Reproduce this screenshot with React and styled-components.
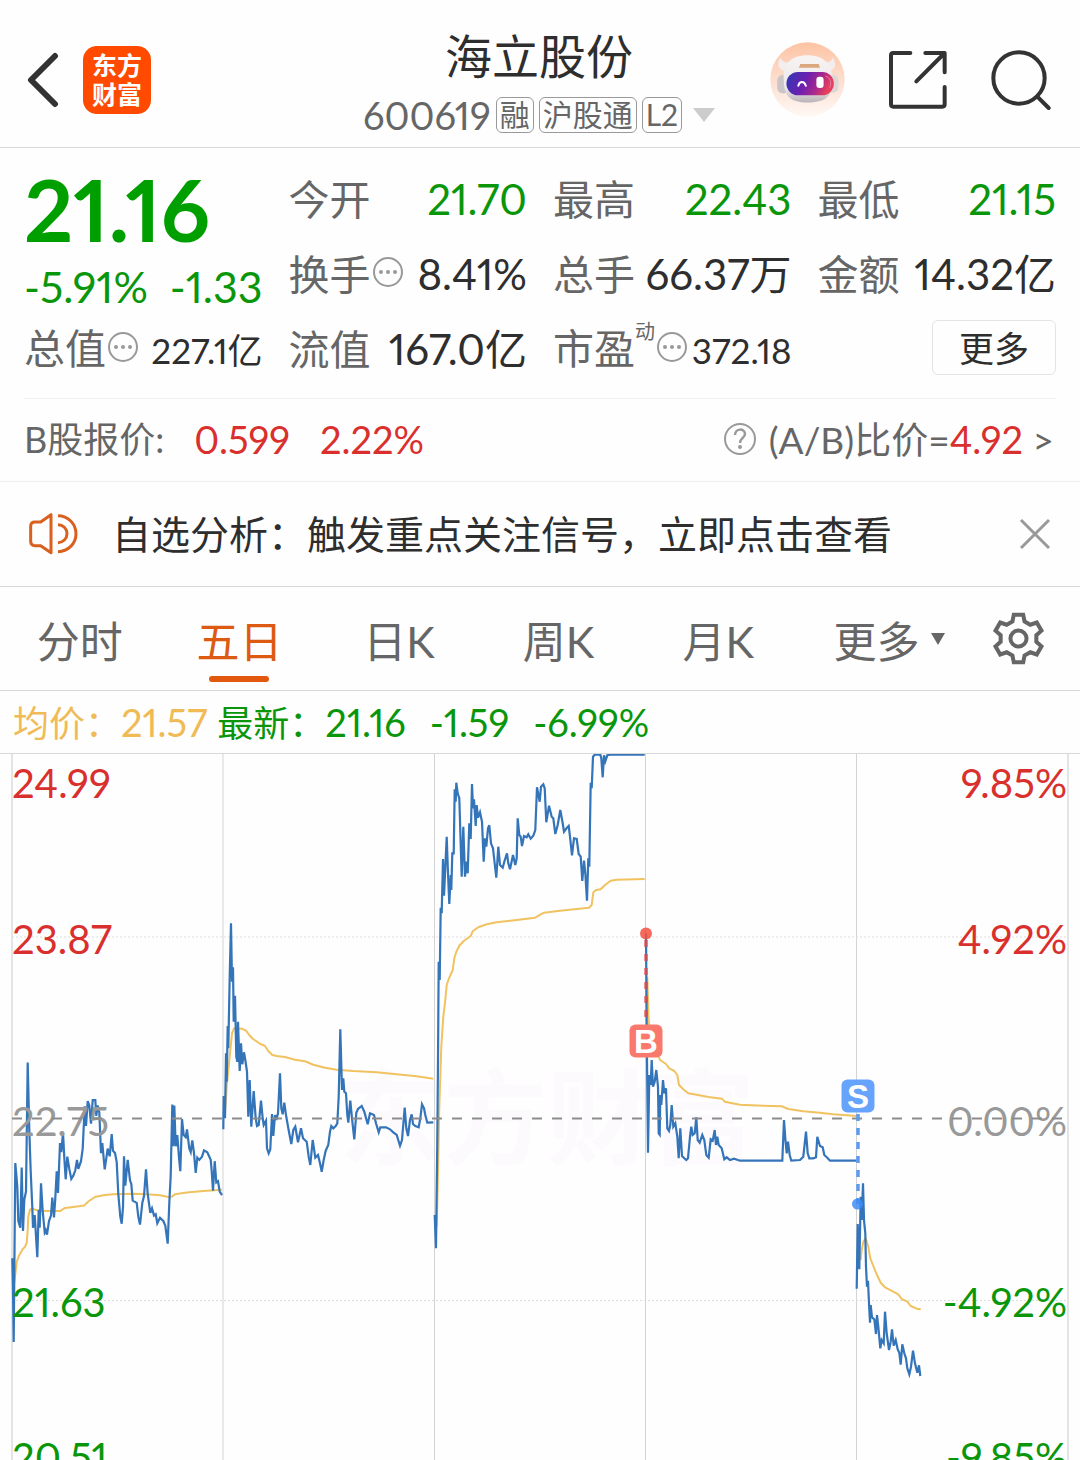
import React, { Fragment, useState } from 'react';
import styled, { createGlobalStyle } from 'styled-components';

const GREEN = '#0a960a';
const RED = '#d9302e';
const GRAY = '#666666';
const DARK = '#2e2e2e';

const GlobalStyle = createGlobalStyle`
    * {
        box-sizing: border-box;
    }
    body {
        margin: 0;
        background-color: #fefefe;
        font-family: Lato, "Noto Sans CJK SC", sans-serif;
        font-variant-numeric: proportional-nums;
        color: ${DARK};
    }
    button {
        margin: 0;
        padding: 0;
        border: 0;
        background: none;
        font: inherit;
        font-variant-numeric: inherit;
        color: inherit;
        cursor: pointer;
    }
    svg {
        display: block;
        flex: none;
    }
`;

const Page = styled.div`
    display: flex;
    flex-direction: column;
    height: 100vh;
    overflow: hidden;
`;

/* ---------- header ---------- */
const TopBar = styled.header`
    display: grid;
    grid-template-columns: 1fr auto 1fr;
    align-items: center;
    min-height: 148px;
    padding: 12px 29px 0 27px;
    border-bottom: 1px solid #d8d8d8;
`;

const TopSide = styled.div`
    display: flex;
    align-items: center;
    justify-content: ${props => (props.$end ? 'flex-end' : 'flex-start')};
    gap: ${props => (props.$end ? '44px' : '24px')};
`;

const Logo = styled.div`
    width: 68px;
    height: 68px;
    padding: 5px 0;
    border-radius: 14px;
    background-color: #ff4a00;
    color: #ffffff;
    font-size: 25px;
    font-weight: bold;
    line-height: 29px;
    text-align: center;
`;

const TitleBox = styled.div`
    display: flex;
    flex-direction: column;
    align-items: center;
`;

const StockName = styled.h1`
    margin: 0;
    font-size: 47px;
    font-weight: normal;
    line-height: 70px;
`;

const StockCode = styled.button`
    display: flex;
    align-items: center;
    gap: 5px;
    color: ${GRAY};
    font-size: 38px;
    line-height: 48px;
`;

const Badge = styled.span`
    height: 36px;
    padding: 0 3px;
    border: 1px solid #999999;
    border-radius: 6px;
    font-size: 30px;
    line-height: 33px;
`;

const Caret = styled.span`
    width: 0;
    height: 0;
    margin-left: ${props => props.$gap}px;
    border: ${props => props.$size}px solid transparent;
    border-top: ${props => props.$drop}px solid ${props => props.$color};
    border-bottom: 0;
`;

/* ---------- quote ---------- */
const Quote = styled.section`
    display: grid;
    grid-template-columns: repeat(4, 1fr);
    grid-auto-rows: 75px;
    column-gap: 26px;
    margin: 0 24px;
    padding: 15px 0 10px;
    border-bottom: 1px solid #f0f0f0;
`;

const PriceBox = styled.div`
    grid-row: span 2;
    color: ${GREEN};
`;

const Price = styled.div`
    color: #009f00;
    font-size: 86px;
    font-weight: bold;
    line-height: 92px;
`;

const Change = styled.div`
    display: flex;
    justify-content: space-between;
    font-size: 43px;
    line-height: 64px;
`;

const Stat = styled.div`
    display: flex;
    align-items: baseline;
    line-height: 72px;
`;

const StatLabel = styled.span`
    color: ${GRAY};
    font-size: 41px;
    white-space: nowrap;
`;

const StatSup = styled.span`
    align-self: flex-start;
    color: ${GRAY};
    font-size: 20px;
    line-height: 36px;
`;

const StatValue = styled.span`
    margin-left: auto;
    color: ${props => props.$color || DARK};
    font-size: ${props => (props.$small ? 35 : 42)}px;
    white-space: nowrap;
`;

const TipButton = styled.button`
    align-self: center;
    margin: 0 0 8px 2px;
`;

const MoreButton = styled.button`
    place-self: start end;
    width: 124px;
    height: 55px;
    margin-top: 7px;
    border: 1px solid #e4e4e4;
    border-radius: 6px;
    font-size: 35px;
    line-height: 50px;
`;

/* ---------- B share ---------- */
const BShare = styled.section`
    display: flex;
    align-items: center;
    justify-content: space-between;
    min-height: 83px;
    padding: 0 26px 2px 24px;
    border-bottom: 1px solid #eeeeee;
    color: ${GRAY};
    font-size: 36px;
    line-height: 50px;
`;

const BPart = styled.div`
    display: flex;
    align-items: center;
    gap: ${props => props.$gap}px;
`;

const Up = styled.span`
    color: ${RED};
    font-size: 38px;
`;

const RatioLink = styled.a`
    color: inherit;
    font-size: 37px;
    text-decoration: none;
`;

/* ---------- notice ---------- */
const Notice = styled.section`
    display: flex;
    align-items: center;
    min-height: 105px;
    padding: 0 29px 0 28px;
    border-bottom: 1px solid #d8d8d8;
`;

const NoticeText = styled.p`
    flex: 1;
    margin: 0 0 0 34px;
    font-size: 39px;
    line-height: 56px;
`;

/* ---------- tabs ---------- */
const Tabs = styled.nav`
    display: grid;
    grid-template-columns: repeat(5, 1fr) 182px 100px;
    min-height: 104px;
    border-bottom: 1px solid #d8d8d8;
`;

const Tab = styled.button`
    position: relative;
    display: flex;
    align-items: center;
    justify-content: center;
    color: ${props => (props.$active ? '#dd5a12' : GRAY)};
    font-size: 43px;

    &::after {
        content: '';
        display: ${props => (props.$active ? 'block' : 'none')};
        position: absolute;
        bottom: 8px;
        width: 60px;
        height: 6px;
        border-radius: 3px;
        background-color: #e2580e;
    }
`;

const GearButton = styled.button`
    display: flex;
    align-items: center;
    padding-left: 12px;
`;

/* ---------- chart ---------- */
const Legend = styled.div`
    display: flex;
    align-items: center;
    gap: 10px;
    min-height: 63px;
    padding: 0 13px;
    border-bottom: 1px solid #d8d8d8;
    color: ${GREEN};
    font-size: 36px;
    line-height: 50px;
`;

const LegendItem = styled.span`
    display: flex;
    align-items: baseline;
    color: ${props => props.$color};
`;

const LegendValue = styled.span`
    margin-right: ${props => props.$gap || 0}px;
    font-size: 38px;
`;

const ChartBox = styled.main`
    flex: 1;
    min-height: 0;
    overflow: hidden;
`;

const ChartSvg = styled.svg`
    width: 100%;
    height: auto;
`;

const AxisText = styled.text`
    fill: ${props => props.fill};
    font-size: 40px;
`;

const MarkText = styled.text`
    fill: #ffffff;
    font-family: "Liberation Sans", sans-serif;
    font-size: 33px;
    font-weight: bold;
`;

const Watermark = styled.text`
    fill: #fdfafe;
    font-size: 104px;
    font-weight: bold;
`;

// one entry per trading day: origin and units per pixel, then x,y pairs
const DAYS = [
    {
        x: 0, y: 750, sx: 3, sy: 2.208,
        price: '37,1122 39,1190 41,1307 46,912 50,948 52,965 55,1040 61,1055 65,922 69,1062 73,993 78,975 83,690 88,840 92,930 97,1010 99,1055 104,1027 112,1120 116,1015 119,1055 123,957 128,1018 134,1065 137,1060 141,1070 147,1040 153,1028 157,988 162,1032 166,990 170,930 174,978 180,868 184,888 189,845 193,900 197,948 202,898 208,925 214,947 220,940 226,928 231,905 235,925 243,908 248,880 254,787 258,830 263,775 268,785 273,825 278,773 286,773 289,808 293,785 298,800 303,890 307,868 314,926 323,880 329,897 335,848 339,885 345,890 350,910 355,980 361,1030 365,1046 369,1010 372,897 376,962 383,905 390,950 394,958 398,995 410,1000 415,1030 420,1048 427,1000 432,985 438,926 443,980 451,1022 456,1012 462,1028 467,1025 472,1045 480,1033 490,1040 496,1050 503,1090 508,1000 512,940 517,783 520,875 523,785 527,875 532,850 537,900 541,930 546,815 551,850 557,855 561,838 568,880 572,888 577,862 582,890 587,934 592,900 598,905 606,898 612,884 622,888 632,905 635,930 639,973 644,908 649,955 654,952 659,975 666,983',
        avg: '42,1180 47,1150 50,1130 56,1118 62,1110 68,1102 75,1097 80,1088 83,1060 85,1030 90,1015 97,1013 120,1018 180,1018 195,1011 220,1009 252,1006 265,997 285,987 310,983 340,981 400,980 440,981 480,983 505,987 516,986 525,981 560,977 610,974 666,971',
    },
    {
        x: 210, y: 880, sx: 3, sy: 3,
        price: '40,748 41,648 45,715 48,520 50,605 53,438 55,505 59,290 63,130 66,305 69,262 71,425 75,347 79,530 82,545 84,425 89,573 93,490 97,553 102,517 106,540 111,575 115,710 119,600 124,740 131,633 137,715 141,738 146,735 153,662 158,715 161,735 168,722 171,805 176,820 181,808 186,702 190,768 195,705 199,720 204,700 210,580 214,685 218,703 223,668 228,705 235,745 244,792 250,750 256,740 264,787 273,745 279,775 290,785 296,830 301,855 308,780 316,833 324,825 330,850 335,875 341,840 347,812 355,795 360,755 364,738 370,745 377,738 382,730 386,650 391,448 396,630 400,595 403,635 408,640 412,705 415,728 421,662 426,715 433,778 439,698 444,687 455,678 463,695 473,733 480,700 487,703 492,705 498,730 506,757 511,742 528,742 540,748 550,757 560,765 570,797 576,780 584,683 589,745 594,768 600,720 605,703 609,732 616,738 626,742 631,715 636,673 642,685 646,705 652,728 670,727',
        avg: '44,712 50,620 57,550 62,500 66,460 72,445 95,446 108,452 118,465 128,476 138,483 148,490 165,498 175,513 187,525 200,528 225,531 255,539 285,544 310,554 345,563 380,569 430,573 500,577 560,583 620,589 670,596',
    },
    {
        x: 420, y: 740, sx: 3, sy: 3,
        price: '44,1425 48,1525 52,1200 54,960 56,665 59,720 62,503 65,520 69,357 72,467 80,290 84,400 88,492 92,405 94,450 97,340 101,340 104,148 107,185 109,128 113,160 118,175 125,410 130,260 135,410 139,365 143,400 148,250 152,297 156,132 159,205 162,178 167,258 170,195 174,233 180,217 186,245 191,365 195,295 199,320 204,265 208,256 213,310 219,325 223,360 229,413 235,320 240,375 248,383 253,365 261,340 265,370 270,388 279,345 286,375 290,355 293,235 298,285 302,290 306,318 312,288 320,292 325,283 332,296 340,287 346,270 351,142 359,185 363,140 370,133 374,145 379,247 387,197 395,230 400,235 406,282 413,255 421,210 428,250 432,275 440,264 446,258 450,290 456,346 462,295 470,297 476,342 482,350 487,423 492,362 496,400 501,482 505,355 508,380 512,128 515,145 519,50 524,44 541,44 544,55 548,112 552,46 556,64 562,46 570,44 674,44',
        avg: '50,1460 54,1300 58,1100 64,920 70,830 76,780 80,735 87,715 98,690 103,655 109,635 118,617 132,602 152,588 158,574 175,562 200,553 230,547 290,540 345,533 372,518 420,512 470,507 507,503 515,495 520,457 528,450 542,448 555,435 572,422 590,419 674,417',
    },
    {
        x: 630, y: 900, sx: 3, sy: 3,
        price: '48,100 51,480 54,758 58,525 62,555 65,480 69,560 74,545 79,510 84,560 86,700 89,704 91,585 94,615 99,540 103,580 108,565 112,685 117,693 121,675 125,615 130,680 136,670 142,710 146,775 151,685 156,768 163,775 169,780 174,775 180,710 184,680 188,705 194,700 199,652 203,720 209,728 217,705 223,720 229,765 236,773 242,718 248,722 254,690 258,735 262,710 266,735 275,745 283,778 290,772 300,780 312,776 330,782 457,782 462,660 466,715 470,760 474,725 479,765 484,782 510,780 520,770 528,695 533,760 538,775 550,775 558,772 562,710 570,738 578,742 583,765 592,773 600,782 680,782',
        avg: '52,230 56,360 64,440 80,455 90,480 108,492 118,505 133,513 142,525 147,555 160,568 175,580 200,584 235,591 276,596 284,605 330,614 400,617 455,619 475,627 520,634 570,638 610,643 680,648',
    },
    {
        x: 830, y: 1060, sx: 3, sy: 3,
        price: '80,686 83,492 88,628 92,410 95,480 99,370 102,480 106,520 108,620 111,680 114,662 117,730 120,788 122,735 126,772 133,778 138,822 141,765 145,800 151,865 155,840 161,850 165,755 170,820 177,870 182,845 186,808 191,857 197,840 203,868 208,878 212,914 217,853 223,880 228,895 232,925 238,943 243,920 249,872 255,910 262,938 267,916 271,948',
        avg: '92,600 95,570 100,545 107,535 115,560 121,595 130,618 140,643 152,668 165,682 190,695 205,703 215,717 232,725 242,738 260,746 272,748',
    },
];

const AXIS = [
    { y: 798, price: '24.99', rate: '9.85%', color: RED },
    { y: 954, price: '23.87', rate: '4.92%', color: RED },
    { y: 1136, price: '22.75', rate: '0.00%', color: '#999999' },
    { y: 1317, price: '21.63', rate: '-4.92%', color: GREEN },
    { y: 1472, price: '20.51', rate: '-9.85%', color: GREEN },
];

const toPoints = (day, text) =>
    text
        .split(' ')
        .map(pair => {
            const [x, y] = pair.split(',').map(Number);
            return `${(day.x + x / day.sx).toFixed(1)},${(day.y + y / day.sy).toFixed(1)}`;
        })
        .join(' ');

const gearPoints = () => {
    const tooth = [[-18, -51], [-14, -71], [14, -71], [18, -51]];
    const points = [];
    for (let i = 0; i < 6; i++) {
        const a = (i * Math.PI) / 3;
        tooth.forEach(([x, y]) => {
            points.push(`${(x * Math.cos(a) - y * Math.sin(a)).toFixed(1)},${(x * Math.sin(a) + y * Math.cos(a)).toFixed(1)}`);
        });
    }
    return points.join(' ');
};

const BackIcon = () => (
    <svg width="32" height="56" viewBox="0 0 32 56" fill="none" stroke="#333" strokeWidth="6" strokeLinecap="round" strokeLinejoin="round">
        <path d="M28 4L4 28L28 52" />
    </svg>
);

const RobotIcon = () => (
    <svg width="75" height="75" viewBox="0 0 228 228">
        <defs>
            <linearGradient id="halo" x1="0" y1="0" x2="0" y2="1">
                <stop offset="0" stopColor="#fdc3a4" />
                <stop offset="0.6" stopColor="#fde3d6" />
                <stop offset="1" stopColor="#fff8f5" />
            </linearGradient>
            <linearGradient id="visor" x1="0" y1="0" x2="1" y2="0.25">
                <stop offset="0" stopColor="#2d3bb4" />
                <stop offset="0.45" stopColor="#6a1fb0" />
                <stop offset="0.75" stopColor="#a8288e" />
                <stop offset="1" stopColor="#e8405a" />
            </linearGradient>
            <linearGradient id="shell" x1="0" y1="0" x2="0" y2="1">
                <stop offset="0" stopColor="#f8f4f4" />
                <stop offset="0.7" stopColor="#ece8ea" />
                <stop offset="1" stopColor="#b9b2b6" />
            </linearGradient>
        </defs>
        <circle cx="114" cy="114" r="113" fill="url(#halo)" />
        <path d="M32 47C20 65 24 83 44 88L60 62C46 64 35 58 32 47ZM191 47C203 65 200 83 182 88L165 62C178 64 188 58 191 47Z" fill="#f3eded" />
        <rect x="22" y="100" width="36" height="56" rx="16" fill="#cbc5c8" />
        <rect x="174" y="100" width="34" height="54" rx="16" fill="#dcd6d9" />
        <path d="M42 118C38 66 64 40 114 40C164 40 190 66 190 124C190 166 166 184 114 184C64 184 42 166 42 118Z" fill="url(#shell)" />
        <path d="M92 67H148L152 78H88Z" fill="#dba77f" />
        <rect x="50" y="91" width="144" height="71" rx="35" fill="url(#visor)" />
        <path d="M86 133C90 118 104 118 109 133" fill="none" stroke="#fff" strokeWidth="6" strokeLinecap="round" />
        <rect x="141" y="106" width="22" height="34" rx="9" fill="#fff" />
        <path d="M170 104C184 108 188 124 182 138" fill="none" stroke="#e57a9c" strokeWidth="3" strokeLinecap="round" />
    </svg>
);

const ShareIcon = () => (
    <svg width="58" height="58" viewBox="443 95 174 174" fill="none" stroke="#333" strokeWidth="12" strokeLinecap="round" strokeLinejoin="round">
        <path d="M507 101H456Q449 101 449 108V255Q449 262 456 262H603Q610 262 610 255V203" />
        <path d="M552 101H610V159M607 104L525 186" />
    </svg>
);

const SearchIcon = () => (
    <svg width="60" height="60" viewBox="752 88 180 180" fill="none" stroke="#333" strokeWidth="12" strokeLinecap="round">
        <circle cx="836" cy="172" r="77" />
        <path d="M891 228L925 262" />
    </svg>
);

const DotsIcon = () => (
    <svg width="30" height="30" viewBox="0 0 30 30" fill="#999">
        <circle cx="15" cy="15" r="14" fill="none" stroke="#999" strokeWidth="2" />
        <circle cx="8" cy="15" r="2" />
        <circle cx="15" cy="15" r="2" />
        <circle cx="22" cy="15" r="2" />
    </svg>
);

const HelpIcon = () => (
    <svg width="34" height="34" viewBox="0 0 34 34" fill="none" stroke="#999" strokeWidth="2">
        <circle cx="17" cy="17" r="15" />
        <path d="M12 13C12 6 22 6 22 12C22 16 17 16 17 21" strokeWidth="2.5" />
        <circle cx="17" cy="25" r="1" />
    </svg>
);

const SpeakerIcon = () => (
    <svg width="50" height="44" viewBox="84 34 150 132" fill="none" stroke="#d9601f" strokeWidth="9" strokeLinejoin="round">
        <path d="M153 42V156L122 135H105Q92 135 92 122V77Q92 64 105 64H122Z" />
        <path d="M174 72A27 27 0 0 1 174 126M174 45A54 54 0 0 1 174 153" />
    </svg>
);

const CloseIcon = () => (
    <svg width="32" height="32" viewBox="0 0 32 32" stroke="#999" strokeWidth="3">
        <path d="M2 2L30 30M30 2L2 30" />
    </svg>
);

const GearIcon = () => (
    <svg width="53" height="53" viewBox="-79 -79 158 158" fill="none" stroke={GRAY} strokeWidth="12">
        <polygon points={gearPoints()} />
        <circle r="24" />
    </svg>
);

const StatItem = ({ label, sup, tip, value, color, small }) => (
    <Stat>
        <StatLabel>{label}</StatLabel>
        {sup && <StatSup>{sup}</StatSup>}
        {tip && <TipButton aria-label={label + '说明'}><DotsIcon /></TipButton>}
        <StatValue $color={color} $small={small}>{value}</StatValue>
    </Stat>
);

const Chart = () => (
    <ChartSvg viewBox="0 754 1080 730" role="img" aria-label="五日走势">
        <Watermark x="547" y="1157" textAnchor="middle">东方财富</Watermark>
        <g stroke="#d4d4d4">
            <path d="M223 754V1484M434.5 754V1484M645.5 754V1484M856.5 754V1484" />
            <path d="M12 754V1484M1068 754V1484" stroke="#e4e4e4" strokeWidth="2" />
            <path d="M12 937H1068M12 1300.5H1068" stroke="#dddddd" strokeDasharray="2 2" />
        </g>
        {DAYS.map(day => (
            <Fragment key={day.x}>
                <polyline points={toPoints(day, day.avg)} fill="none" stroke="#f0c260" strokeWidth="2" strokeLinejoin="round" />
                <polyline points={toPoints(day, day.price)} fill="none" stroke="#3474b9" strokeWidth="2.2" />
            </Fragment>
        ))}
        {AXIS.map(row => (
            <Fragment key={row.y}>
                <AxisText x="12" y={row.y} fill={row.color}>{row.price}</AxisText>
                <AxisText x="1067" y={row.y} fill={row.color} textAnchor="end">{row.rate}</AxisText>
            </Fragment>
        ))}
        <path d="M12 1118.5H1062" stroke="#8c8c8c" strokeWidth="1.8" strokeDasharray="10 10" />

        <path d="M646 940V1024" stroke="#e04848" strokeOpacity="0.8" strokeWidth="3.5" strokeDasharray="7 7" />
        <circle cx="646" cy="933.5" r="6" fill="#f4503f" fillOpacity="0.85" />
        <rect x="629.5" y="1024.5" width="33" height="33" rx="6" fill="#f97a6c" />
        <MarkText x="646" y="1053" textAnchor="middle">B</MarkText>

        <path d="M858 1114V1204" stroke="#5c9bf0" strokeWidth="3.5" strokeDasharray="7 7" />
        <circle cx="857.5" cy="1204" r="5.5" fill="#3f8cf5" fillOpacity="0.85" />
        <rect x="841.5" y="1079.5" width="33" height="33" rx="6" fill="#66a3fd" />
        <MarkText x="858" y="1108" textAnchor="middle">S</MarkText>
    </ChartSvg>
);

const TABS = ['分时', '五日', '日K', '周K', '月K'];

const App = () => {
    const [tab, setTab] = useState('五日');
    const [notice, setNotice] = useState(true);

    return (
        <Page>
            <GlobalStyle />
            <TopBar>
                <TopSide>
                    <button aria-label="返回"><BackIcon /></button>
                    <Logo>东方<br />财富</Logo>
                </TopSide>
                <TitleBox>
                    <StockName>海立股份</StockName>
                    <StockCode>
                        600619
                        <Badge>融</Badge>
                        <Badge>沪股通</Badge>
                        <Badge>L2</Badge>
                        <Caret $size={11} $drop={14} $color="#cccccc" $gap={6} />
                    </StockCode>
                </TitleBox>
                <TopSide $end>
                    <button aria-label="智能助手"><RobotIcon /></button>
                    <button aria-label="分享"><ShareIcon /></button>
                    <button aria-label="搜索"><SearchIcon /></button>
                </TopSide>
            </TopBar>

            <Quote>
                <PriceBox>
                    <Price>21.16</Price>
                    <Change>
                        <span>-5.91%</span>
                        <span>-1.33</span>
                    </Change>
                </PriceBox>
                <StatItem label="今开" value="21.70" color={GREEN} />
                <StatItem label="最高" value="22.43" color={GREEN} />
                <StatItem label="最低" value="21.15" color={GREEN} />
                <StatItem label="换手" value="8.41%" tip />
                <StatItem label="总手" value="66.37万" />
                <StatItem label="金额" value="14.32亿" />
                <StatItem label="总值" value="227.1亿" tip small />
                <StatItem label="流值" value="167.0亿" />
                <StatItem label="市盈" sup="动" value="372.18" tip small />
                <MoreButton>更多</MoreButton>
            </Quote>

            <BShare>
                <BPart $gap={30}>
                    <span>B股报价:</span>
                    <Up>0.599</Up>
                    <Up>2.22%</Up>
                </BPart>
                <BPart $gap={12}>
                    <button aria-label="比价说明"><HelpIcon /></button>
                    <RatioLink href="#ratio">(A/B)比价=<Up>4.92</Up> &gt;</RatioLink>
                </BPart>
            </BShare>

            {notice && (
                <Notice>
                    <SpeakerIcon />
                    <NoticeText>自选分析：触发重点关注信号，立即点击查看</NoticeText>
                    <button aria-label="关闭" onClick={() => setNotice(false)}><CloseIcon /></button>
                </Notice>
            )}

            <Tabs>
                {TABS.map(name => (
                    <Tab key={name} $active={name === tab} onClick={() => setTab(name)}>{name}</Tab>
                ))}
                <Tab>
                    更多
                    <Caret $size={7} $drop={12} $color={GRAY} $gap={11} />
                </Tab>
                <GearButton aria-label="设置"><GearIcon /></GearButton>
            </Tabs>

            <Legend>
                <LegendItem $color="#f0bb55">均价：<LegendValue>21.57</LegendValue></LegendItem>
                <LegendItem>
                    最新：
                    <LegendValue $gap={24}>21.16</LegendValue>
                    <LegendValue $gap={24}>-1.59</LegendValue>
                    <LegendValue>-6.99%</LegendValue>
                </LegendItem>
            </Legend>

            <ChartBox>
                <Chart />
            </ChartBox>
        </Page>
    );
};

export default App;
